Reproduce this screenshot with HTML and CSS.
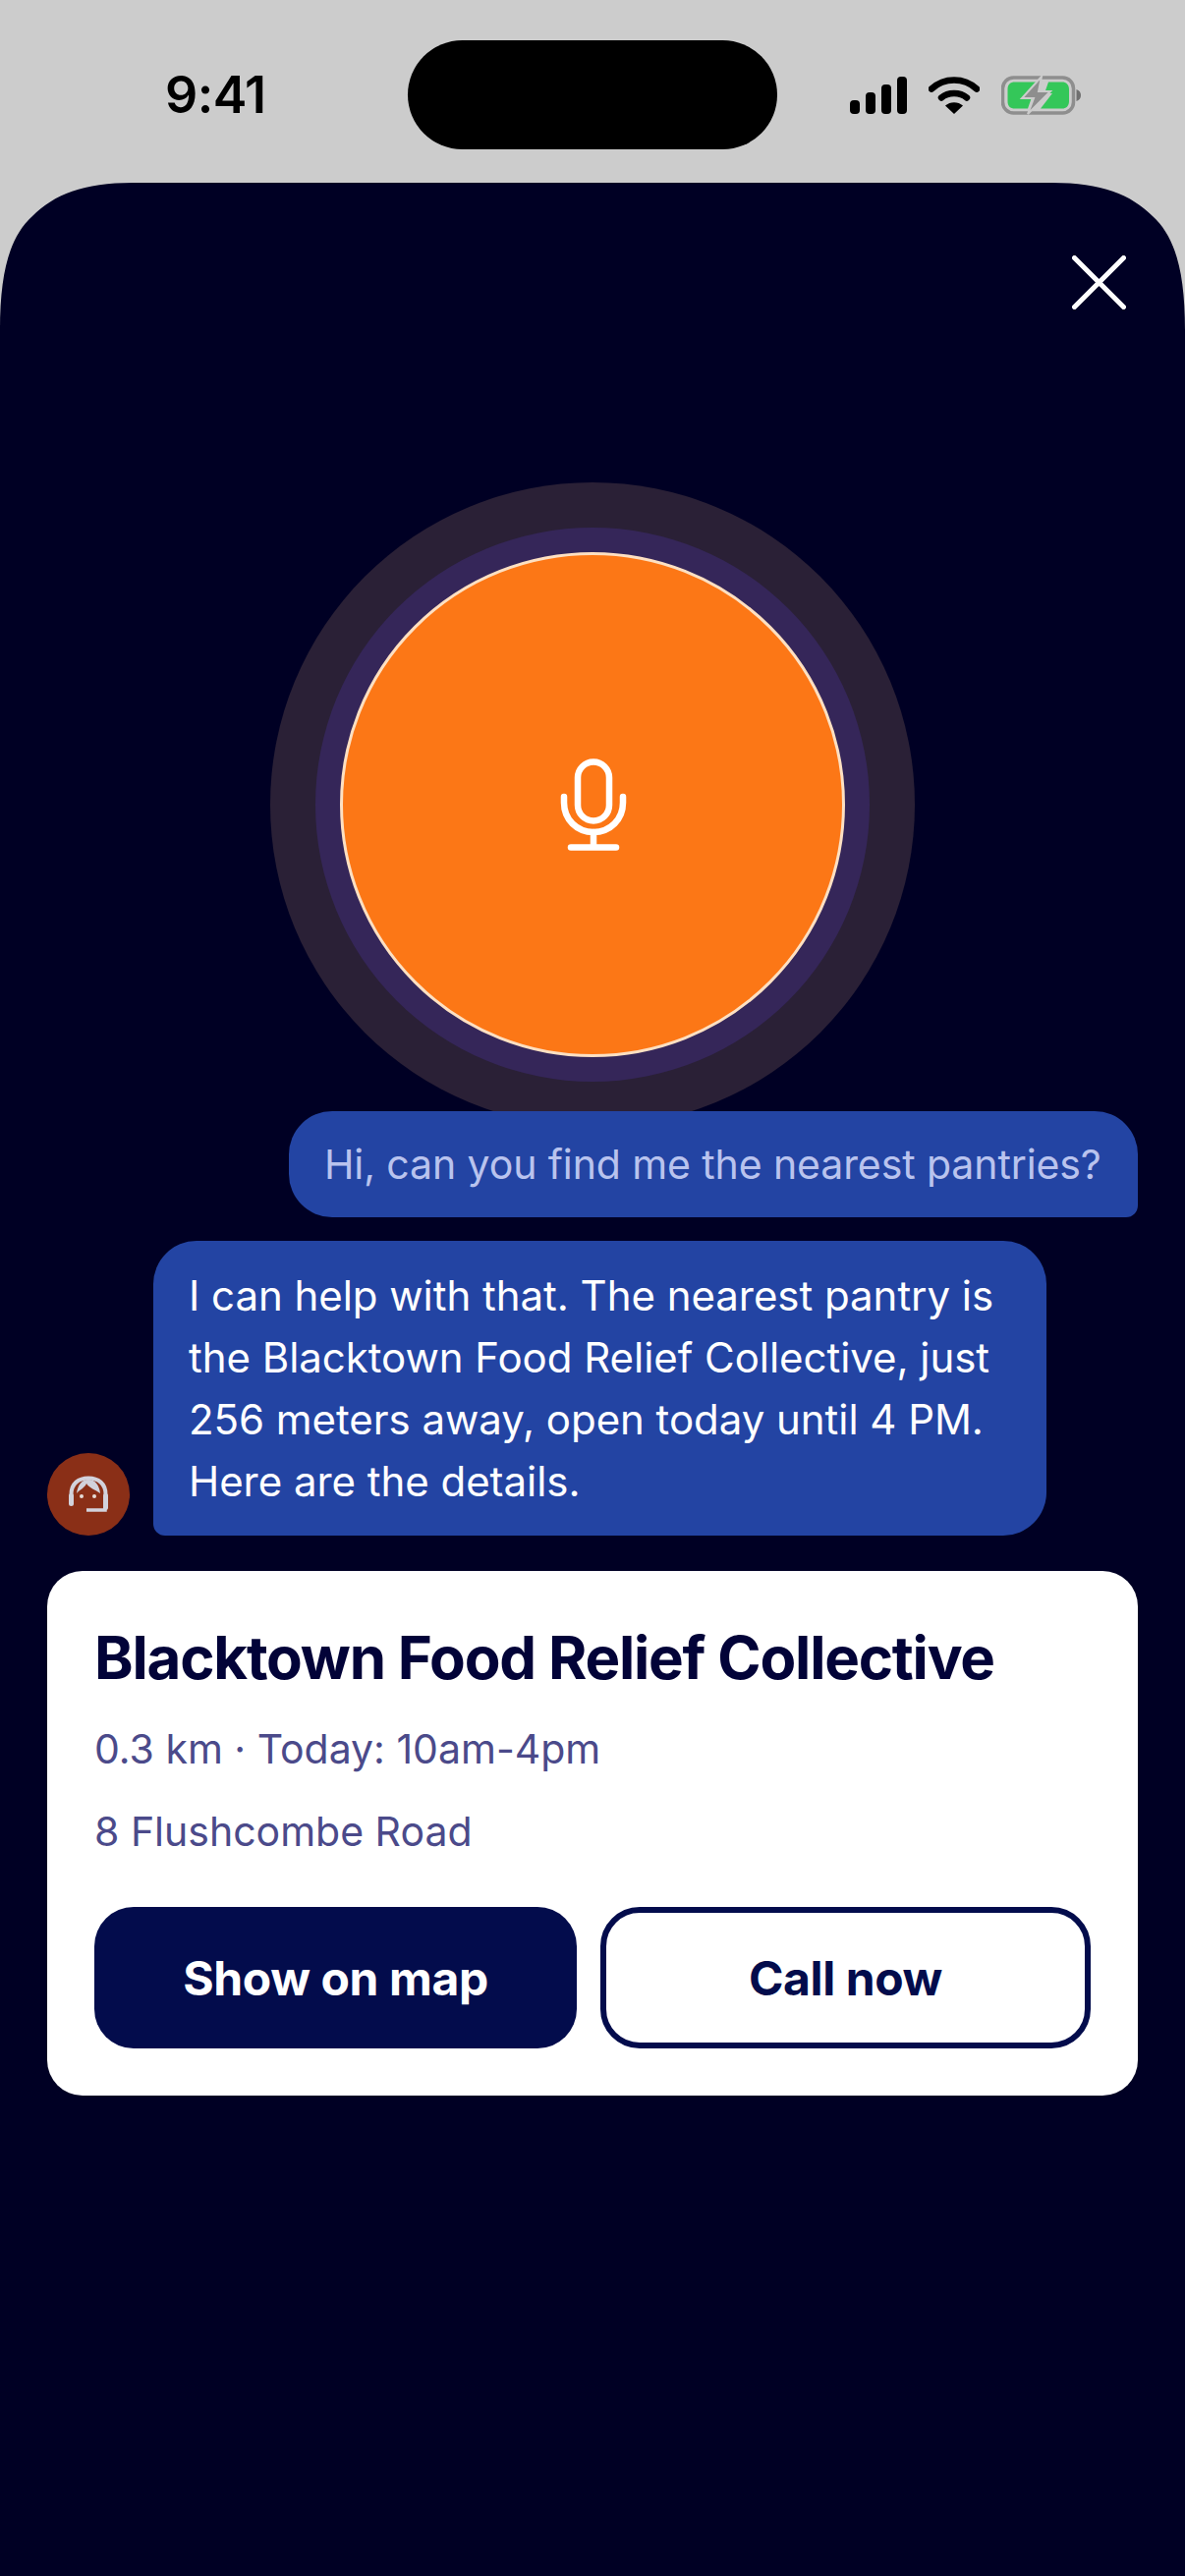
FILE: index.html
```html
<!DOCTYPE html>
<html lang="en">
<head>
<meta charset="utf-8">
<title>Pantry assistant</title>
<link rel="stylesheet" href="styles.css">
</head>
<body>
<div class="phone">
  <header class="status">
    <div class="time">9:41</div>
    <div class="island"></div>
    <div class="status-icons">
      <svg class="signal" width="58" height="38" viewBox="0 0 58 38"><rect x="0" y="24" width="10" height="14" rx="4"/><rect x="16" y="16" width="10" height="22" rx="4"/><rect x="32" y="8" width="10" height="30" rx="4"/><rect x="48" y="0" width="10" height="38" rx="4"/></svg>
      <svg class="wifi" width="52" height="38" viewBox="0 0 52 38"><path d="M3 12.5C16 0.5 36 0.5 49 12.5" fill="none" stroke="#000" stroke-width="6.5" stroke-linecap="round"/><path d="M13 21.5C20 15.5 32 15.5 39 21.5" fill="none" stroke="#000" stroke-width="6.5" stroke-linecap="round"/><path d="M26 38L17 29.5C22 25 30 25 35 29.5Z"/></svg>
      <svg class="battery" width="82" height="40" viewBox="0 0 82 40"><rect x="1.5" y="2" width="72" height="36" rx="11" fill="none" stroke="#8e8e8e" stroke-width="3.5"/><path d="M76.500 14c3 1 4.500 3 4.500 6s-1.500 5-4.500 6z" fill="#6f6f6f"/><path d="M14 6.500H36L23 22H31L27 33.500H14C9 33.500 6.500 31 6.500 26V14C6.500 9 9 6.500 14 6.500Z" fill="#34c759"/><path d="M62 6.500C66 6.500 69 9 69 14V26C69 31 66 33.500 62 33.500H40L52 18H44L48 6.500Z" fill="#34c759"/><path d="M41 1L21 23H33L27 39L50 16H38Z" fill="#8e8e8e" stroke="#ccc" stroke-width="2"/></svg>
    </div>
  </header>
  <main class="sheet">
    <div class="close-row">
      <svg width="55" height="55" viewBox="0 0 55 55"><path d="M2.500 2.500L52.500 52.500M52.500 2.500L2.500 52.500" stroke="#fff" stroke-width="5" stroke-linecap="round"/></svg>
    </div>
    <div class="orb-wrap">
      <div class="orb-outer">
        <div class="orb-mid">
          <div class="orb-core">
            <svg class="mic" width="68" height="94" viewBox="0 0 68 94"><g fill="none" stroke="#fff" stroke-width="6.500" stroke-linecap="round"><rect x="18" y="3.500" width="32" height="60" rx="16"/><path d="M4 39V45C4 62 17 75 34 75C51 75 64 62 64 45V39"/><path d="M34 75V89.500"/><path d="M11 90.500H57"/></g></svg>
          </div>
        </div>
      </div>
    </div>
    <section class="chat">
      <div class="bubble bubble-user">Hi, can you find me the nearest pantries?</div>
      <div class="agent-row">
        <div class="avatar">
          <svg width="84" height="84" viewBox="0 0 84 84"><path d="M24.500 47V42C24.500 31 32 25.500 42 25.500C52 25.500 59.500 31 59.500 42V52" fill="none" stroke="#d2d2dc" stroke-width="4"/><rect x="22" y="41" width="5" height="13" rx="2.500" fill="#d2d2dc"/><rect x="57" y="41" width="5" height="17" rx="2.500" fill="#d2d2dc"/><path d="M30 41C33 37 38 36 40 31C43 36 49 37 54 41C53 33 49 27 42 27C35 27 31 33 30 41Z" fill="#d2d2dc"/><circle cx="35" cy="44" r="2" fill="#e6dcd8"/><circle cx="48" cy="44" r="2" fill="#e6dcd8"/><path d="M59 52V58H40" fill="none" stroke="#d2d2dc" stroke-width="3.500"/></svg>
        </div>
        <div class="bubble bubble-agent">I can help with that. The nearest pantry is the Blacktown Food Relief Collective, just 256 meters away, open today until 4 PM. Here are the details.</div>
      </div>
      <article class="card">
        <h2 class="card-title">Blacktown Food Relief Collective</h2>
        <p class="card-meta card-hours">0.3 km · Today: 10am-4pm</p>
        <p class="card-meta card-address">8 Flushcombe Road</p>
        <div class="card-actions">
          <button class="btn btn-solid">Show on map</button>
          <button class="btn btn-outline">Call now</button>
        </div>
      </article>
    </section>
  </main>
</div>
</body>
</html>
```
FILE: styles.css
```css
* { box-sizing: border-box; }
html, body { margin: 0; padding: 0; }
body { font-family: Inter, "Liberation Sans", sans-serif; background: #ccc; }
.phone { width: 1206px; height: 2622px; overflow: hidden; display: flex; flex-direction: column; background: #ccc; }

.status { height: 186px; flex: none; display: grid; grid-template-columns: 415px 376px 1fr; padding-top: 41px; align-items: start; }
.time { padding-left: 168px; font-size: 52px; font-weight: 600; line-height: 111px; color: #000; letter-spacing: -0.6px; }
.island { height: 111px; background: #000; border-radius: 56px; }
.status-icons { display: flex; align-items: center; height: 111px; padding-left: 74px; gap: 22px; }
.status-icons svg { flex: none; }

.sheet { flex: 1; background: #000024; clip-path: path('M0 150C0 90 10 55 33 34C55 12 85 0 135 0H1071C1121 0 1151 12 1173 34C1196 55 1206 90 1206 150V2436H0Z'); display: flex; flex-direction: column; padding: 74px 48px 0; }
.close-row { display: flex; justify-content: flex-end; padding-right: 12px; }
.orb-wrap { display: flex; justify-content: center; margin-top: 176px; margin-bottom: -16px; }
.orb-outer { width: 656px; height: 656px; border-radius: 50%; background: #2a2036; display: flex; align-items: center; justify-content: center; }
.orb-mid { width: 564px; height: 564px; border-radius: 50%; background: #352659; display: flex; align-items: center; justify-content: center; }
.orb-core { width: 514px; height: 514px; border-radius: 50%; background: #fc7716; border: 3px solid #fde0c2; display: flex; align-items: center; justify-content: center; padding-left: 1px; }

.chat { position: relative; display: flex; flex-direction: column; }
.bubble { background: #2344a3; line-height: 63px; }
.bubble-user { align-self: flex-end; color: #b9c3ee; font-size: 41px; letter-spacing: -0.1px; width: 864px; height: 108px; padding: 23px 36px; border-radius: 44px 44px 12px 44px; white-space: nowrap; }
.agent-row { display: flex; align-items: flex-end; gap: 24px; margin-top: 24px; }
.avatar { width: 84px; height: 84px; flex: none; border-radius: 50%; background: #8a2f17; }
.bubble-agent { width: 909px; height: 300px; padding: 24px 36px; color: #fff; font-size: 42px; letter-spacing: -0.04px; border-radius: 44px 44px 44px 12px; }

.card { margin-top: 36px; height: 534px; background: #fff; border-radius: 36px; padding: 48px; }
.card-title { margin: 5px 0 0; font-size: 60px; line-height: 70px; font-weight: 700; color: #020338; letter-spacing: -1.2px; }
.card-meta { margin: 0; font-size: 41px; line-height: 60px; color: #4b4a8a; }
.card-hours { margin-top: 28px; }
.card-address { margin-top: 24px; }
.card-actions { display: grid; grid-template-columns: 491px 499px; gap: 24px; margin-top: 47px; }
.btn { height: 144px; border-radius: 40px; font-family: inherit; font-size: 48px; font-weight: 700; letter-spacing: -0.4px; padding: 0; }
.btn-solid { background: #030c4c; color: #fff; border: none; }
.btn-outline { background: #fff; color: #030c4c; border: 6px solid #030c4c; }
```
